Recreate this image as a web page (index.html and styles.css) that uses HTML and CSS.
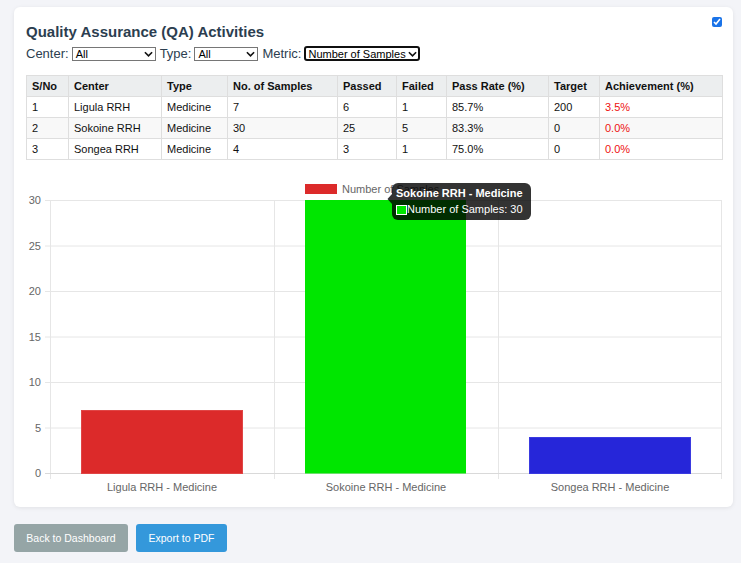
FILE: index.html
```html
<!DOCTYPE html>
<html>
<head>
<meta charset="utf-8">
<link rel="stylesheet" href="styles.css">
</head>
<body>
<div class="page">
  <div class="card">
    <input type="checkbox" class="corner-check" checked>
    <h2 class="title">Quality Assurance (QA) Activities</h2>
    <div class="filters">
      <label class="flabel">Center:</label>
      <div class="sel sel-center"><span>All</span><svg class="chev" viewBox="0 0 10 6"><path d="M1 1l4 4 4-4" fill="none" stroke="#111" stroke-width="1.8"/></svg></div>
      <label class="flabel">Type:</label>
      <div class="sel sel-type"><span>All</span><svg class="chev" viewBox="0 0 10 6"><path d="M1 1l4 4 4-4" fill="none" stroke="#111" stroke-width="1.8"/></svg></div>
      <label class="flabel">Metric:</label>
      <div class="sel sel-metric"><span>Number of Samples</span><svg class="chev" viewBox="0 0 10 6"><path d="M1 1l4 4 4-4" fill="none" stroke="#111" stroke-width="1.8"/></svg></div>
    </div>
    <table class="qa-table">
      <colgroup>
        <col class="c1"><col class="c2"><col class="c3"><col class="c4"><col class="c5"><col class="c6"><col class="c7"><col class="c8"><col class="c9">
      </colgroup>
      <thead>
        <tr><th>S/No</th><th>Center</th><th>Type</th><th>No. of Samples</th><th>Passed</th><th>Failed</th><th>Pass Rate (%)</th><th>Target</th><th>Achievement (%)</th></tr>
      </thead>
      <tbody>
        <tr><td>1</td><td>Ligula RRH</td><td>Medicine</td><td>7</td><td>6</td><td>1</td><td>85.7%</td><td>200</td><td class="ach">3.5%</td></tr>
        <tr class="alt"><td>2</td><td>Sokoine RRH</td><td>Medicine</td><td>30</td><td>25</td><td>5</td><td>83.3%</td><td>0</td><td class="ach">0.0%</td></tr>
        <tr><td>3</td><td>Songea RRH</td><td>Medicine</td><td>4</td><td>3</td><td>1</td><td>75.0%</td><td>0</td><td class="ach">0.0%</td></tr>
      </tbody>
    </table>
    <svg class="chart" width="696" height="330" viewBox="0 0 696 330">
      <g stroke="#e6e6e6" stroke-width="1">
        <line x1="19" y1="33.5" x2="696" y2="33.5"/>
        <line x1="19" y1="79" x2="696" y2="79"/>
        <line x1="19" y1="124.5" x2="696" y2="124.5"/>
        <line x1="19" y1="170" x2="696" y2="170"/>
        <line x1="19" y1="215.5" x2="696" y2="215.5"/>
        <line x1="19" y1="261" x2="696" y2="261"/>
        <line x1="24.5" y1="33" x2="24.5" y2="312"/>
        <line x1="248.5" y1="33" x2="248.5" y2="312"/>
        <line x1="472.5" y1="33" x2="472.5" y2="312"/>
        <line x1="695.5" y1="33" x2="695.5" y2="312"/>
      </g>
      <line x1="19" y1="306.5" x2="696" y2="306.5" stroke="#d9d9d9"/>
      <g class="ytick" text-anchor="end">
        <text x="15" y="37">30</text>
        <text x="15" y="82.5">25</text>
        <text x="15" y="128">20</text>
        <text x="15" y="173.5">15</text>
        <text x="15" y="219">10</text>
        <text x="15" y="264.5">5</text>
        <text x="15" y="310">0</text>
      </g>
      <rect x="55.5" y="243.5" width="161" height="63" fill="#dc2a2a" stroke="#e04545"/>
      <rect x="279" y="33" width="161" height="273.5" fill="#00e600"/>
      <rect x="503.5" y="270.5" width="161" height="36" fill="#2626d9" stroke="#3a3ae0"/>
      <g class="xtick" text-anchor="middle">
        <text x="136" y="324">Ligula RRH - Medicine</text>
        <text x="360" y="324">Sokoine RRH - Medicine</text>
        <text x="584" y="324">Songea RRH - Medicine</text>
      </g>
      <rect x="279" y="17" width="32" height="10" fill="#dc2a2a"/>
      <text class="legend" x="316" y="25.5">Number of Samples</text>
      <path d="M366 27 L361.5 32 L366 37 Z" fill="rgba(0,0,0,0.8)"/>
      <rect x="366" y="16" width="139" height="37" rx="6" fill="rgba(0,0,0,0.8)"/>
      <text class="tt-title" x="370" y="30">Sokoine RRH - Medicine</text>
      <rect x="370.5" y="38.5" width="10" height="9" fill="#00e600" stroke="#ffffff" stroke-width="1"/>
      <text class="tt-body" x="381" y="46">Number of Samples: 30</text>
    </svg>
  </div>
  <div class="actions">
    <button class="btn btn-gray">Back to Dashboard</button>
    <button class="btn btn-blue">Export to PDF</button>
  </div>
</div>
</body>
</html>
```

FILE: styles.css
```css
html, body {
  margin: 0;
  padding: 0;
  background: #f3f4f8;
  font-family: "Liberation Sans", Arial, sans-serif;
  color: #333;
}
.page {
  padding: 7px 8px 0 14px;
}
.card {
  position: relative;
  box-sizing: border-box;
  width: 719px;
  height: 500px;
  background: #fff;
  border-radius: 6px;
  box-shadow: 0 1px 4px rgba(0, 0, 0, 0.08);
  padding: 16px 11px 0 12px;
}
.corner-check {
  position: absolute;
  top: 10px;
  right: 11px;
  width: 10px;
  height: 10px;
  margin: 0;
  accent-color: #1a73e8;
}
.title {
  margin: 0;
  font-size: 15px;
  line-height: 18px;
  font-weight: bold;
  color: #2c3e50;
}
.filters {
  display: flex;
  align-items: center;
  height: 15px;
  margin-top: 5px;
  font-size: 13px;
  color: #2c3e50;
}
.flabel {
  margin-right: 3px;
  white-space: nowrap;
}
.sel {
  box-sizing: border-box;
  display: flex;
  align-items: center;
  justify-content: space-between;
  height: 14px;
  border: 1px solid #767676;
  font-size: 11px;
  color: #000;
  padding: 0 2px 0 3px;
  margin-right: 4px;
  background: #fff;
}
.sel-center { width: 84px; }
.sel-type { width: 64px; }
.sel-metric {
  width: 116px;
  border: 2px solid #101010;
  border-radius: 3px;
  padding: 0 1px 0 2px;
  height: 15px;
}
.chev {
  width: 9px;
  height: 6px;
}
.qa-table {
  margin-top: 14px;
  width: 696px;
  table-layout: fixed;
  border-collapse: collapse;
  font-size: 11px;
  color: #111;
}
.qa-table th, .qa-table td {
  border: 1px solid #dedede;
  padding: 0 5px;
  height: 20px;
  text-align: left;
  white-space: nowrap;
}
.qa-table th {
  background: #eceeef;
  font-weight: bold;
}
.qa-table tr.alt td { background: #f8f8f8; }
.c1 { width: 42px; }
.c2 { width: 93px; }
.c3 { width: 66px; }
.c4 { width: 110px; }
.c5 { width: 59px; }
.c6 { width: 50px; }
.c7 { width: 102px; }
.c8 { width: 51px; }
.c9 { width: 123px; }
.qa-table td.ach { color: #ee1111; }
.chart {
  display: block;
  margin-top: 7px;
  font-family: "Liberation Sans", Arial, sans-serif;
}
.ytick text, .xtick text, .legend {
  font-size: 11px;
  fill: #666;
}
.tt-title {
  font-size: 11px;
  font-weight: bold;
  fill: #fff;
}
.tt-body {
  font-size: 11px;
  fill: #fff;
}
.actions {
  display: flex;
  gap: 8px;
  margin-top: 17px;
}
.btn {
  height: 28px;
  border: none;
  border-radius: 3px;
  color: #fff;
  font-family: "Liberation Sans", Arial, sans-serif;
  font-size: 10.5px;
  padding: 0 12px;
}
.btn-gray { background: #95a5a6; width: 114px; }
.btn-blue { background: #3498db; width: 91px; }
```
